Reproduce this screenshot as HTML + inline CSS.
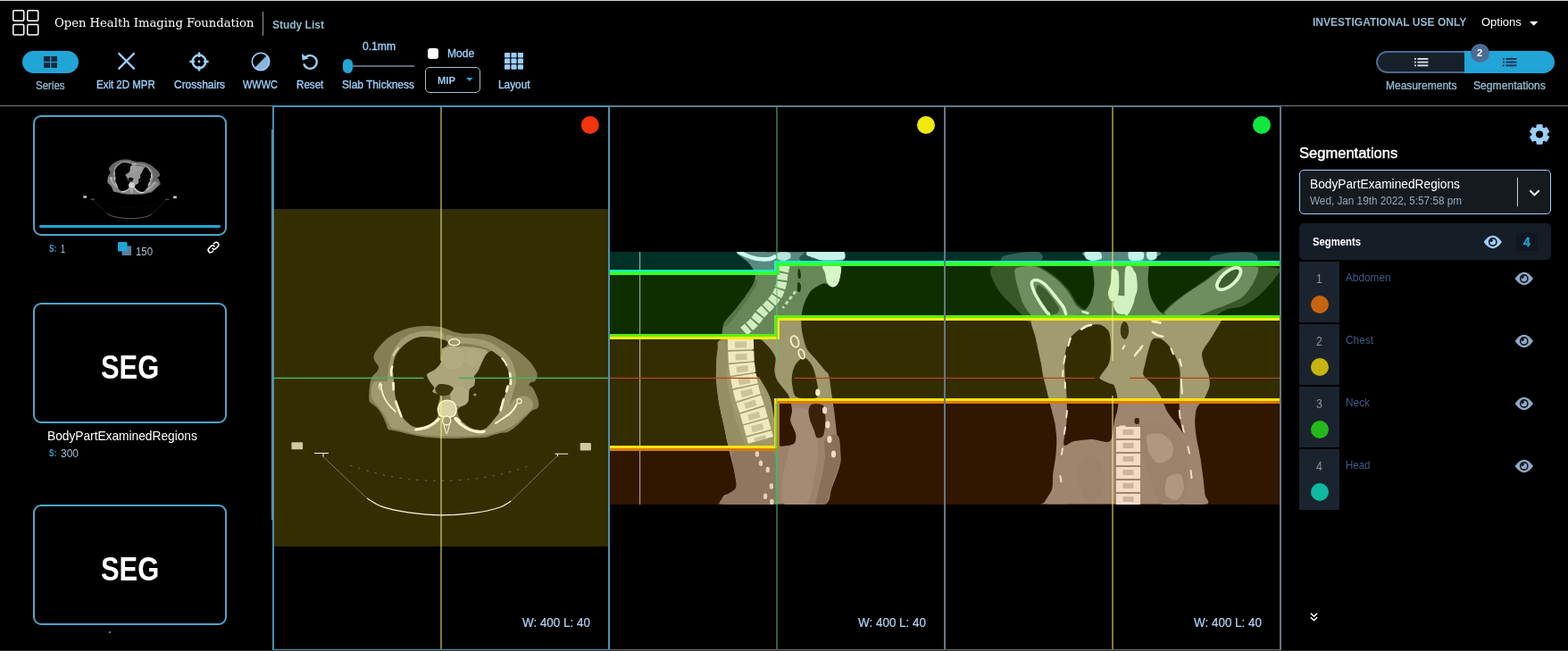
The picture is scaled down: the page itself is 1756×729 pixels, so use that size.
<!DOCTYPE html>
<html lang="en">
<head>
<meta charset="utf-8">
<title>OHIF Viewer</title>
<style>
*{box-sizing:border-box;margin:0;padding:0}
html,body{width:1756px;height:729px;overflow:hidden;background:#000}
body{position:relative;font-family:"Liberation Sans",sans-serif;color:#fff;font-size:13px}
.a{position:absolute}
.t{position:absolute;white-space:nowrap;line-height:1;transform-origin:0 0}
svg{position:absolute;overflow:visible}
</style>
</head>
<body>
<div class="a" style="left:0;top:0;width:1756px;height:1px;background:#d0d0d0"></div>

<!-- header -->
<svg style="left:14px;top:11px" width="30" height="30" viewBox="0 0 30 30" fill="none" stroke="#fff" stroke-width="1.5">
<rect x="0.75" y="0.75" width="12" height="11.5" rx="1.2"/><rect x="16.75" y="0.75" width="12" height="11.5" rx="1.2"/>
<rect x="0.75" y="16.5" width="12" height="11.5" rx="1.2"/><rect x="16.75" y="16.5" width="12" height="11.5" rx="1.2"/>
</svg>
<div class="t" style="left:60.5px;top:18.6px;font-size:13.6px;color:#fff;font-family:'DejaVu Serif','Liberation Serif',serif;transform:scaleX(0.9671);">Open Health Imaging Foundation</div>
<div class="a" style="left:294px;top:13px;width:1px;height:27px;background:#8d9aa3"></div>
<div class="t" style="left:304.8px;top:21.0px;font-size:13px;color:#91b9cd;font-weight:bold;transform:scaleX(0.9214);">Study List</div>
<div class="t" style="left:1470.3px;top:17.9px;font-size:13px;color:#91b9cd;font-weight:bold;transform:scaleX(0.9252);">INVESTIGATIONAL USE ONLY</div>
<div class="t" style="left:1659.2px;top:17.5px;font-size:13.5px;color:#fff;transform:scaleX(0.9608);">Options</div>
<svg style="left:1712.5px;top:24px" width="9.4" height="4.8" viewBox="0 0 10 5"><path d="M0 0h10L5 5z" fill="#fff"/></svg>
<!-- toolbar -->
<div class="a" style="left:25px;top:57px;width:63px;height:25px;border-radius:12.5px;background:#20a5d6"></div>
<svg style="left:49px;top:63px" width="15" height="13" viewBox="0 0 15 13" fill="#14293c">
<rect x="0" y="0" width="7.1" height="6"/><rect x="8.3" y="0" width="6.7" height="6"/>
<rect x="0" y="7.2" width="7.1" height="5.8"/><rect x="8.3" y="7.2" width="6.7" height="5.8"/></svg>
<div class="t" style="left:40.2px;top:88.7px;font-size:13px;color:#91b9cd;-webkit-text-stroke:0.35px #91b9cd;transform:scaleX(0.8847);">Series</div>
<svg style="left:131px;top:58px" width="21" height="21" viewBox="0 0 21 21"><path d="M1.6 1.4L19.6 19.4M19.6 1.4L1.6 19.4" stroke="#9ccef9" stroke-width="2.2" fill="none"/></svg>
<div class="t" style="left:108.2px;top:88.0px;font-size:13px;color:#9ccef9;-webkit-text-stroke:0.35px #9ccef9;transform:scaleX(0.8844);">Exit 2D MPR</div>
<svg style="left:211.5px;top:57.5px" width="22" height="22" viewBox="0 0 22 22" fill="none" stroke="#9ccef9">
<circle cx="11" cy="11" r="7.4" stroke-width="2.5"/>
<path d="M11 0.4V6M11 16V21.6M0.4 11H6M16 11H21.6" stroke-width="2.6"/>
<circle cx="11" cy="11" r="1.4" fill="#9ccef9" stroke="none"/></svg>
<div class="t" style="left:194.9px;top:88.0px;font-size:13px;color:#9ccef9;-webkit-text-stroke:0.35px #9ccef9;transform:scaleX(0.9191);">Crosshairs</div>
<svg style="left:280.5px;top:57.5px" width="22" height="22" viewBox="0 0 22 22">
<path d="M18.2 3.8A10.2 10.2 0 0 1 3.8 18.2z" fill="#86b4dc"/>
<circle cx="11" cy="11" r="9.7" fill="none" stroke="#9ccef9" stroke-width="1.6"/></svg>
<div class="t" style="left:272.2px;top:88.0px;font-size:13px;color:#9ccef9;-webkit-text-stroke:0.35px #9ccef9;transform:scaleX(0.8442);">WWWC</div>
<svg style="left:336.5px;top:58.5px" width="20" height="20" viewBox="0 0 20 20" fill="none">
<path d="M4.2 6.3A7.4 7.4 0 1 1 3.2 12.4" stroke="#9ccef9" stroke-width="2.3"/>
<path d="M1 1.2L1.6 8.6L8.6 6.6z" fill="#9ccef9"/></svg>
<div class="t" style="left:331.7px;top:87.9px;font-size:13px;color:#9ccef9;-webkit-text-stroke:0.35px #9ccef9;transform:scaleX(0.8922);">Reset</div>
<div class="t" style="left:405.5px;top:45.6px;font-size:12px;color:#9ccef9;-webkit-text-stroke:0.35px #9ccef9;transform:scaleX(1.0089);">0.1mm</div>
<div class="a" style="left:394px;top:73px;width:70px;height:2px;background:#5a6a7b"></div>
<div class="a" style="left:384px;top:66px;width:11px;height:16px;border-radius:5.5px;background:#20a5d6"></div>
<div class="t" style="left:383.4px;top:87.9px;font-size:13px;color:#9ccef9;-webkit-text-stroke:0.35px #9ccef9;transform:scaleX(0.9202);">Slab Thickness</div>
<div class="a" style="left:479px;top:54px;width:12px;height:12px;border-radius:3px;background:#fff"></div>
<div class="t" style="left:501.1px;top:53.6px;font-size:12.3px;color:#9ccef9;-webkit-text-stroke:0.35px #9ccef9;transform:scaleX(0.9815);">Mode</div>
<div class="a" style="left:476px;top:75px;width:62px;height:29px;border-radius:5px;border:1px solid #a9b9c6"></div>
<div class="t" style="left:490.0px;top:84.2px;font-size:11.6px;color:#9ccef9;font-weight:bold;transform:scaleX(0.9698);">MIP</div>
<svg style="left:521.5px;top:87px" width="7.6" height="4" viewBox="0 0 8 4"><path d="M0 0h8L4 4z" fill="#2a9fd0"/></svg>
<svg style="left:565px;top:59px" width="21" height="19" viewBox="0 0 21 19" fill="#9ccef9"><rect x="0.0" y="0.0" width="6.2" height="5.6" rx="0.8"/><rect x="7.4" y="0.0" width="6.2" height="5.6" rx="0.8"/><rect x="14.8" y="0.0" width="6.2" height="5.6" rx="0.8"/><rect x="0.0" y="6.6" width="6.2" height="5.6" rx="0.8"/><rect x="7.4" y="6.6" width="6.2" height="5.6" rx="0.8"/><rect x="14.8" y="6.6" width="6.2" height="5.6" rx="0.8"/><rect x="0.0" y="13.2" width="6.2" height="5.6" rx="0.8"/><rect x="7.4" y="13.2" width="6.2" height="5.6" rx="0.8"/><rect x="14.8" y="13.2" width="6.2" height="5.6" rx="0.8"/></svg>
<div class="t" style="left:558.2px;top:87.9px;font-size:13px;color:#9ccef9;-webkit-text-stroke:0.35px #9ccef9;transform:scaleX(0.9121);">Layout</div>
<div class="a" style="left:1541px;top:57px;width:100px;height:25px;border-radius:12.5px 0 0 12.5px;background:#16202b;border:2px solid #4c6a8c;border-right:none"></div>
<div class="a" style="left:1640px;top:57px;width:101px;height:25px;border-radius:0 12.5px 12.5px 0;background:#20a5d6"></div>
<svg style="left:1583.8px;top:64.8px" width="16" height="10" viewBox="0 0 16 10" fill="#d3dbe3"><rect x="0" y="0.0" width="1.8" height="1.9"/><rect x="3.4" y="0.0" width="12" height="1.9"/><rect x="0" y="3.7" width="1.8" height="1.9"/><rect x="3.4" y="3.7" width="12" height="1.9"/><rect x="0" y="7.4" width="1.8" height="1.9"/><rect x="3.4" y="7.4" width="12" height="1.9"/></svg>
<svg style="left:1683px;top:64.8px" width="16" height="10" viewBox="0 0 16 10" fill="#15304a"><rect x="0" y="0.0" width="1.8" height="1.9"/><rect x="3.4" y="0.0" width="12" height="1.9"/><rect x="0" y="3.7" width="1.8" height="1.9"/><rect x="3.4" y="3.7" width="12" height="1.9"/><rect x="0" y="7.4" width="1.8" height="1.9"/><rect x="3.4" y="7.4" width="12" height="1.9"/></svg>
<div class="a" style="left:1647px;top:49px;width:21px;height:21px;border-radius:50%;background:#4d6c93"></div>
<div class="t" style="left:1654.3px;top:53.9px;font-size:11.5px;color:#fff;font-weight:bold;transform:scaleX(0.9694);">2</div>
<div class="t" style="left:1551.9px;top:88.9px;font-size:13px;color:#91b9cd;-webkit-text-stroke:0.35px #91b9cd;transform:scaleX(0.9235);">Measurements</div>
<div class="t" style="left:1650.0px;top:88.9px;font-size:13px;color:#91b9cd;-webkit-text-stroke:0.35px #91b9cd;transform:scaleX(0.9329);">Segmentations</div>
<div class="a" style="left:0;top:118px;width:1756px;height:1px;background:#7b7b7b"></div>
<!-- left panel -->
<div class="a" style="left:37px;top:129px;width:217px;height:135px;border:2px solid #4ea5c8;border-radius:9px"></div>
<div class="a" style="left:44px;top:252px;width:203px;height:3px;border-radius:1.5px;background:#20a5d6"></div>
<div class="t" style="left:55.3px;top:273.3px;font-size:11.5px;color:#3a9fd0;font-weight:bold;transform:scaleX(0.7130);">S:</div>
<div class="t" style="left:68.0px;top:272.8px;font-size:12px;color:#a9c3d3;transform:scaleX(0.7492);">1</div>
<svg style="left:132px;top:271px" width="15" height="15" viewBox="0 0 15 15">
<rect x="4.5" y="4.5" width="10.5" height="10.5" fill="#5d7d9d"/><rect x="0" y="0" width="10.5" height="10.5" rx="1" fill="#20a5d6"/></svg>
<div class="t" style="left:151.6px;top:275.8px;font-size:12px;color:#a9c3d3;transform:scaleX(0.9490);">150</div>
<svg style="left:231.5px;top:269.5px" width="14" height="14" viewBox="0 0 14 14" fill="none" stroke="#fff" stroke-width="1.6" stroke-linecap="round">
<path d="M6 8.2a2.7 2.7 0 0 0 3.8 0l2.4-2.4a2.7 2.7 0 0 0-3.8-3.8l-1 1"/>
<path d="M8 5.8a2.7 2.7 0 0 0-3.8 0L1.8 8.2a2.7 2.7 0 0 0 3.8 3.8l1-1"/></svg>
<div class="a" style="left:37px;top:339px;width:217px;height:135px;border:2px solid #4ea5c8;border-radius:9px"></div>
<div class="t" style="left:112.8px;top:394.3px;font-size:36.5px;color:#fff;font-weight:bold;transform:scaleX(0.8459);">SEG</div>
<div class="t" style="left:53.4px;top:480.8px;font-size:14.3px;color:#fff;transform:scaleX(0.9601);">BodyPartExaminedRegions</div>
<div class="t" style="left:55.3px;top:502.3px;font-size:11.5px;color:#3a9fd0;font-weight:bold;transform:scaleX(0.7130);">S:</div>
<div class="t" style="left:68.2px;top:501.8px;font-size:12px;color:#a9c3d3;transform:scaleX(0.9989);">300</div>
<div class="a" style="left:37px;top:565px;width:217px;height:135px;border:2px solid #4ea5c8;border-radius:9px"></div>
<div class="t" style="left:112.8px;top:620.4px;font-size:36.5px;color:#fff;font-weight:bold;transform:scaleX(0.8459);">SEG</div>
<div class="a" style="left:121.5px;top:707px;width:2px;height:1.5px;background:#777"></div>
<div class="a" style="left:303.5px;top:145px;width:2px;height:437px;background:#8a8a8a"></div>
<!-- viewports -->
<svg style="left:0;top:0" width="1756" height="729" viewBox="0 0 1756 729"><defs><filter id="b1" filterUnits="userSpaceOnUse" x="0" y="0" width="1756" height="729"><feGaussianBlur stdDeviation="0.7"/></filter><filter id="b2" filterUnits="userSpaceOnUse" x="0" y="0" width="1756" height="729"><feGaussianBlur stdDeviation="0.45"/></filter></defs><defs><g id="axg"><g filter="url(#b1)"><path d="M493.5 366.3C490.2 365.7 482.7 365.2 479.1 365.1C475.5 365.0 470.0 365.4 466.7 365.8C463.4 366.2 457.4 367.5 454.4 368.4C451.4 369.3 446.7 371.2 444.1 372.5C441.5 373.8 437.2 376.4 434.8 378.2C432.5 379.9 428.5 383.7 426.6 385.9C424.7 388.0 421.5 392.2 420.4 394.1C419.3 396.0 418.4 398.8 418.4 400.3C418.4 401.8 419.7 404.0 420.4 405.4C421.2 406.8 423.8 409.2 424.0 410.6C424.3 411.9 423.4 414.3 422.5 415.7C421.6 417.1 418.4 419.3 417.3 420.9C416.3 422.4 415.3 425.1 414.8 427.0C414.3 429.0 414.0 433.1 413.7 435.3C413.5 437.5 413.2 441.6 413.2 443.5C413.2 445.4 413.2 448.5 413.7 449.7C414.3 450.9 416.0 451.7 417.3 452.8C418.7 453.9 422.0 456.1 423.5 457.9C425.0 459.7 427.5 464.0 428.7 466.2C429.8 468.4 431.4 472.4 432.3 474.4C433.1 476.4 433.8 480.1 434.8 481.1C435.9 482.1 438.2 481.8 440.0 482.1C441.8 482.5 445.7 483.1 448.2 483.7C450.7 484.2 455.8 485.6 458.5 486.2C461.3 486.8 466.1 487.8 468.8 488.3C471.5 488.8 475.8 489.5 479.1 489.8C482.4 490.2 489.7 490.7 493.5 490.9C497.3 491.0 505.0 490.9 507.9 490.9C510.8 490.9 512.4 490.9 515.4 490.9C518.5 490.8 527.0 490.5 530.9 490.3C534.7 490.2 541.2 490.3 544.2 489.8C547.3 489.3 551.2 487.4 553.5 486.7C555.8 486.1 559.8 485.0 561.7 484.7C563.7 484.3 566.3 484.7 567.9 484.2C569.6 483.6 572.2 482.0 574.1 480.6C576.0 479.1 580.3 475.3 582.3 473.4C584.4 471.4 587.7 467.9 589.5 466.2C591.3 464.4 594.1 461.2 595.7 460.0C597.3 458.8 600.8 457.9 601.9 456.9C602.9 455.9 603.4 454.3 603.4 452.8C603.4 451.3 602.5 447.5 601.9 445.6C601.3 443.7 599.6 440.0 598.8 438.4C598.0 436.7 596.5 434.2 595.7 433.2C594.9 432.3 592.7 431.9 592.6 431.2C592.5 430.5 593.8 428.6 594.7 428.1C595.5 427.5 597.9 427.9 598.8 427.0C599.7 426.2 601.0 423.1 601.4 421.9C601.7 420.7 601.7 419.0 601.4 417.8C601.0 416.5 599.7 414.1 598.8 412.6C597.9 411.1 596.0 408.1 594.7 406.5C593.3 404.8 590.3 401.9 588.5 400.3C586.7 398.6 583.2 395.6 581.3 394.1C579.4 392.6 576.1 390.3 574.1 389.0C572.0 387.6 568.1 385.1 565.9 383.8C563.7 382.5 559.8 380.3 557.6 379.2C555.4 378.1 551.6 376.3 549.4 375.6C547.2 374.9 543.6 374.3 541.2 374.0C538.7 373.8 533.6 373.6 530.9 373.5C528.1 373.5 523.3 373.9 520.6 373.7C517.8 373.5 512.5 372.5 510.3 372.0C508.1 371.5 506.4 370.7 504.1 369.9C501.9 369.2 496.8 367.0 493.5 366.3z" fill="#666666" /><path d="M493.5 371.5C491.0 370.8 482.7 370.4 479.1 370.4C475.5 370.5 469.8 371.3 466.7 372.0C463.7 372.7 458.9 374.3 456.5 375.6C454.0 376.9 450.1 379.8 448.2 381.8C446.3 383.7 443.4 387.7 442.0 390.0C440.7 392.3 438.8 396.8 437.9 399.2C437.1 401.7 436.3 406.2 435.9 408.5C435.5 410.8 435.1 414.3 434.8 416.7C434.6 419.2 433.7 424.8 433.8 427.0C433.9 429.2 435.0 430.8 435.9 433.2C436.7 435.7 438.6 442.2 440.0 445.6C441.4 449.0 444.4 455.7 446.2 459.0C447.9 462.3 451.4 467.9 453.4 470.3C455.3 472.6 458.8 475.4 460.6 476.5C462.4 477.5 467.6 479.2 466.7 478.5C465.9 477.8 457.0 474.0 454.4 471.3C451.8 468.6 448.6 461.1 447.2 457.9C445.7 454.8 444.3 450.2 443.6 447.6C442.9 445.0 442.3 440.7 442.0 438.4C441.8 436.0 441.7 432.5 441.5 430.1C441.3 427.8 440.7 423.2 440.5 420.9C440.3 418.5 439.9 414.8 440.0 412.6C440.1 410.4 440.6 406.3 441.0 404.4C441.4 402.5 442.3 399.9 443.1 398.2C443.9 396.6 445.7 393.8 447.2 392.0C448.7 390.3 452.3 386.5 454.4 384.8C456.5 383.2 460.3 380.7 462.6 379.7C465.0 378.7 469.3 377.4 471.9 377.1C474.5 376.8 479.4 377.4 482.2 377.6C484.9 377.9 490.4 378.8 492.5 379.2C494.5 379.6 496.9 381.2 497.6 380.7C498.3 380.2 498.2 376.8 497.6 375.6C497.1 374.3 496.0 372.2 493.5 371.5z" fill="#8a8a8a" /><path d="M500.0 375.6C501.4 374.6 507.5 376.8 510.3 377.1C513.0 377.5 517.8 377.9 520.6 378.2C523.3 378.4 528.1 378.5 530.9 378.9C533.6 379.2 538.4 379.9 541.2 380.7C543.9 381.5 549.0 383.6 551.5 384.8C553.9 386.1 557.5 388.3 559.7 390.0C561.9 391.6 566.0 395.0 567.9 397.2C569.8 399.4 572.9 403.8 574.1 406.5C575.3 409.1 576.6 414.0 577.2 416.7C577.7 419.5 578.2 425.1 578.2 427.0C578.2 429.0 577.7 429.2 577.2 431.2C576.6 433.1 574.9 438.7 574.1 441.5C573.3 444.2 572.0 449.1 571.0 451.8C570.0 454.4 568.1 458.7 566.9 461.0C565.7 463.3 563.5 467.2 561.7 469.2C560.0 471.3 555.8 474.7 553.5 476.5C551.2 478.2 545.9 481.8 544.2 482.6C542.6 483.4 540.6 483.6 541.2 482.6C541.7 481.7 546.7 477.2 548.4 475.4C550.0 473.6 552.3 470.8 553.5 469.2C554.7 467.7 556.7 465.6 557.6 464.1C558.6 462.6 560.0 459.8 560.7 457.9C561.4 456.0 562.1 451.9 562.8 449.7C563.5 447.5 565.0 443.7 565.9 441.5C566.7 439.3 568.3 435.4 568.9 433.2C569.6 431.0 570.9 426.6 571.0 425.0C571.1 423.4 570.2 422.2 570.0 420.9C569.7 419.5 569.5 416.5 568.9 414.7C568.4 412.9 566.8 409.3 565.9 407.5C564.9 405.7 563.1 402.8 561.7 401.3C560.4 399.8 557.1 397.3 555.6 396.2C554.1 395.1 551.8 393.9 550.4 393.1C549.0 392.3 547.9 390.9 545.3 390.0C542.7 389.0 534.8 386.6 530.9 385.9C526.9 385.2 519.6 385.0 515.4 384.8C511.3 384.7 502.1 386.1 500.0 384.8C497.9 383.6 498.6 376.6 500.0 375.6z" fill="#8a8a8a" /><path d="M418.4 428.1C419.7 427.0 423.2 427.1 425.6 427.1C427.9 427.1 433.9 426.7 435.9 428.1C437.8 429.5 439.0 434.5 440.0 437.3C440.9 440.2 442.0 446.4 443.1 449.7C444.2 453.0 446.4 458.9 448.2 462.0C450.0 465.2 454.0 471.0 456.5 473.4C458.9 475.7 463.2 479.1 466.7 479.5C470.3 479.9 479.8 477.7 483.2 476.5C486.6 475.2 489.2 471.1 492.5 470.3C495.8 469.5 504.9 470.0 507.9 470.3C510.9 470.6 512.6 471.9 515.0 472.3C517.4 472.7 522.2 472.0 525.7 473.4C529.2 474.7 537.7 482.5 541.2 482.6C544.6 482.8 548.7 476.9 551.5 474.4C554.2 471.9 559.3 466.8 561.7 464.1C564.2 461.4 567.8 456.3 570.0 453.8C572.2 451.3 575.7 447.0 578.2 445.6C580.7 444.2 586.2 443.1 588.5 443.5C590.8 443.9 594.6 447.0 595.7 448.7C596.8 450.3 597.4 453.9 596.7 455.9C596.0 457.8 592.5 461.2 590.6 463.1C588.6 465.0 584.8 468.2 582.3 470.3C579.9 472.3 574.8 476.9 572.0 478.5C569.3 480.2 565.2 481.5 561.7 482.6C558.3 483.7 550.4 486.0 546.3 486.7C542.2 487.5 535.0 488.0 530.9 488.3C526.8 488.6 518.5 488.7 515.4 488.8C512.4 488.9 510.8 488.8 507.9 488.8C505.0 488.8 497.3 488.9 493.5 488.8C489.7 488.7 482.7 488.1 479.1 487.8C475.5 487.4 469.8 486.8 466.7 486.2C463.7 485.7 459.2 484.3 456.5 483.7C453.7 483.0 448.5 481.6 446.2 481.1C443.8 480.5 440.5 480.6 439.0 479.5C437.4 478.5 435.9 475.3 434.8 473.4C433.7 471.4 432.0 467.2 430.7 465.1C429.5 463.1 427.0 459.7 425.6 457.9C424.2 456.1 421.7 453.4 420.4 451.8C419.2 450.1 416.9 447.8 416.3 445.6C415.7 443.4 415.5 437.6 415.8 435.3C416.1 433.0 417.1 429.2 418.4 428.1z" fill="#878787" /><path d="M494.5 391.0C494.9 389.9 495.8 389.4 497.6 389.0C499.4 388.5 506.2 388.0 507.9 387.9C509.6 387.9 508.6 388.4 510.3 388.4C512.0 388.4 517.8 387.9 520.6 387.9C523.3 388.0 528.1 388.5 530.9 389.0C533.6 389.4 539.1 390.4 541.2 391.0C543.2 391.6 546.0 392.5 546.3 393.6C546.6 394.7 544.1 397.5 543.2 399.2C542.3 401.0 540.6 404.4 539.6 406.5C538.7 408.5 537.0 412.6 536.0 414.7C535.0 416.7 532.4 420.5 531.9 421.9C531.4 423.3 532.0 423.6 531.9 425.0C531.8 426.4 531.7 430.7 530.9 432.2C530.0 433.7 526.5 434.8 525.7 436.3C524.9 437.8 525.0 441.6 524.7 443.5C524.4 445.4 524.5 449.2 523.7 450.7C522.8 452.2 520.3 454.3 518.5 454.8C516.7 455.4 512.2 455.4 510.3 454.8C508.4 454.3 504.4 452.0 504.1 450.7C503.8 449.5 507.9 446.8 507.9 445.6C507.9 444.3 505.4 441.7 503.8 441.5C502.1 441.2 497.5 443.7 495.6 443.5C493.6 443.4 490.9 441.1 489.4 440.4C487.9 439.7 484.6 439.2 484.2 438.4C483.8 437.6 486.4 435.4 486.3 434.3C486.2 433.2 483.9 431.1 483.2 430.1C482.5 429.2 481.8 428.3 481.1 427.1C480.5 425.8 478.3 422.1 478.1 420.9C477.8 419.6 478.0 418.9 479.1 418.0C480.2 417.1 484.6 415.3 486.3 414.2C487.9 413.0 490.4 410.8 491.4 409.5C492.5 408.2 493.6 406.0 494.0 404.4C494.4 402.7 494.7 399.0 494.7 397.2C494.8 395.4 494.1 392.1 494.5 391.0z" fill="#969696" /><circle cx="506.9" cy="400.3" r="12.3" fill="#9e9e9e" stroke="#adadad" stroke-width="0.6"/><circle cx="529.8" cy="400.3" r="10.3" fill="#9b9b9b"/><path d="M471.9 377.1C469.3 377.4 465.0 378.7 462.6 379.7C460.3 380.7 456.5 383.2 454.4 384.8C452.3 386.5 448.7 390.3 447.2 392.0C445.7 393.8 443.9 396.6 443.1 398.2C442.3 399.9 441.4 402.5 441.0 404.4C440.6 406.3 440.1 410.4 440.0 412.6C439.9 414.8 440.3 418.5 440.5 420.9C440.7 423.2 441.3 427.8 441.5 430.1C441.7 432.5 441.8 436.0 442.0 438.4C442.3 440.7 442.9 445.0 443.6 447.6C444.3 450.2 446.3 455.5 447.2 457.9C448.1 460.4 449.3 464.4 450.3 466.2C451.2 467.9 453.0 469.9 454.4 471.3C455.8 472.7 458.9 475.5 460.6 476.5C462.2 477.4 464.8 478.4 466.7 478.5C468.7 478.6 472.9 478.0 475.0 477.5C477.0 476.9 480.5 475.4 482.2 474.4C483.8 473.4 486.2 471.5 487.3 470.3C488.4 469.0 489.9 466.6 490.4 465.1C491.0 463.6 491.4 460.7 491.4 459.0C491.5 457.2 490.8 453.5 490.9 451.8C491.1 450.0 492.3 446.9 492.5 445.6C492.6 444.3 492.6 442.7 492.0 442.0C491.3 441.3 488.4 440.9 487.3 440.4C486.3 440.0 484.4 439.2 484.2 438.4C484.1 437.6 486.4 435.4 486.3 434.3C486.2 433.2 483.9 431.1 483.2 430.1C482.5 429.2 481.8 428.3 481.1 427.1C480.5 425.8 478.3 422.1 478.1 420.9C477.8 419.6 478.0 418.9 479.1 418.0C480.2 417.1 484.6 415.3 486.3 414.2C487.9 413.0 490.4 410.8 491.4 409.5C492.5 408.2 493.6 406.0 494.0 404.4C494.4 402.7 494.6 399.0 494.7 397.2C494.9 395.4 494.7 392.1 495.0 391.0C495.4 389.9 496.8 389.6 497.6 389.0C498.4 388.3 500.8 386.8 501.2 385.9C501.6 384.9 501.9 382.9 500.7 382.0C499.5 381.1 494.9 379.8 492.5 379.2C490.0 378.6 484.9 377.9 482.2 377.6C479.4 377.4 474.5 376.8 471.9 377.1z" fill="#000" /><path d="M550.4 392.9C551.7 392.9 554.1 395.0 555.6 396.2C557.1 397.3 560.4 399.8 561.7 401.3C563.1 402.8 564.9 405.7 565.9 407.5C566.8 409.3 568.4 412.9 568.9 414.7C569.5 416.5 569.7 419.5 570.0 420.9C570.2 422.2 571.1 423.4 571.0 425.0C570.9 426.6 569.6 431.0 568.9 433.2C568.3 435.4 566.7 439.3 565.9 441.5C565.0 443.7 563.5 447.5 562.8 449.7C562.1 451.9 561.4 456.0 560.7 457.9C560.0 459.8 558.6 462.6 557.6 464.1C556.7 465.6 554.7 467.7 553.5 469.2C552.3 470.8 549.6 474.0 548.4 475.4C547.1 476.8 545.5 478.7 544.2 479.5C543.0 480.3 540.6 481.2 539.1 481.4C537.6 481.6 534.6 481.4 532.9 481.1C531.3 480.8 528.3 479.8 526.8 479.0C525.2 478.3 523.0 476.7 521.6 475.6C520.2 474.5 517.6 472.1 516.5 470.8C515.4 469.5 513.9 467.2 513.4 465.6C512.8 464.1 512.1 460.8 512.3 459.5C512.6 458.2 514.3 456.6 515.4 455.9C516.5 455.1 519.3 454.7 520.6 453.8C521.8 452.9 524.1 450.8 524.7 449.2C525.3 447.5 525.0 443.3 525.2 441.5C525.4 439.6 525.5 436.6 526.2 435.3C527.0 434.0 530.1 433.1 530.9 431.7C531.7 430.3 532.1 426.3 532.1 425.0C532.1 423.7 530.4 423.2 530.9 421.9C531.3 420.6 534.4 417.1 535.5 415.2C536.6 413.3 538.2 409.4 539.1 407.5C540.0 405.6 541.3 402.4 542.2 400.8C543.1 399.2 544.7 396.7 545.8 395.6C546.9 394.6 549.1 392.8 550.4 392.9z" fill="#000" /><path d="M487.3 435.3C487.7 433.9 490.4 430.7 492.5 430.1C494.5 429.6 500.7 430.5 502.8 431.2C504.8 431.9 507.8 433.9 507.9 435.3C508.0 436.7 505.4 440.4 503.8 441.5C502.1 442.6 497.5 443.7 495.6 443.5C493.6 443.4 490.5 441.5 489.4 440.4C488.3 439.3 486.9 436.7 487.3 435.3z" fill="#101010" /><circle cx="514.4" cy="443.5" r="9.8" fill="#9c9c9c" stroke="#b4b4b4" stroke-width="0.5"/><circle cx="531.9" cy="442.0" r="1.6" fill="#8a8a8a"/></g><g filter="url(#b2)"><path d="M500.7 448.2C502.6 448.2 506.5 449.4 507.9 450.7C509.3 452.0 510.9 456.0 511.0 457.9C511.1 459.8 510.3 463.9 508.9 465.1C507.6 466.4 502.9 467.2 500.7 467.2C498.5 467.2 493.8 466.4 492.5 465.1C491.1 463.9 490.3 459.8 490.4 457.9C490.5 456.0 492.1 452.0 493.5 450.7C494.9 449.4 498.8 448.2 500.7 448.2z" fill="#cfcfcf" stroke="#ffffff" stroke-width="1.5"/><ellipse cx="500.2" cy="471.0" rx="4.6" ry="5" fill="#8e8e8e" stroke="#ffffff" stroke-width="1.5"/><path d="M497.1 475.9C497.5 477.2 499.4 485.7 500.2 485.7C501.0 485.7 502.9 477.2 503.3 475.9" fill="none" stroke="#ffffff" stroke-width="1.1" stroke-linecap="round" /><path d="M491.4 469.2C490.6 469.9 487.3 473.1 485.3 474.4C483.2 475.7 478.6 478.1 476.0 479.0C473.4 479.9 467.1 480.8 465.7 481.1" fill="none" stroke="#ffffff" stroke-width="3.0" stroke-linecap="round" /><path d="M509.8 468.7C510.7 469.6 514.3 473.8 516.5 475.4C518.6 477.1 523.1 480.0 525.7 481.1C528.3 482.2 533.8 483.4 536.0 483.7C538.2 483.9 541.4 483.2 542.2 483.1" fill="none" stroke="#ffffff" stroke-width="3.0" stroke-linecap="round" /><path d="M511.0 468.2L515.0 471.3" fill="none" stroke="#ffffff" stroke-width="2.5" stroke-linecap="round" /><path d="M425.6 429.1C425.8 429.9 426.6 433.5 427.1 435.3C427.6 437.1 428.4 440.6 429.2 442.5C429.9 444.4 431.6 447.9 432.8 449.7C433.9 451.5 436.6 454.4 437.9 455.9C439.3 457.4 442.4 460.3 443.1 461.0" fill="none" stroke="#ffffff" stroke-width="1.6" stroke-linecap="round" /><ellipse cx="425.9" cy="432.7" rx="1.6" ry="3.6" fill="none" stroke="#ffffff" stroke-width="1"/><path d="M440.5 429.1L440.7 436.3" fill="none" stroke="#ffffff" stroke-width="2.6" stroke-linecap="round" /><path d="M443.3 449.7C443.7 450.8 445.3 455.7 446.2 457.9C447.0 460.1 449.0 465.1 449.5 466.2" fill="none" stroke="#ffffff" stroke-width="2.6" stroke-linecap="round" /><path d="M439.2 410.6C439.0 411.2 438.2 413.9 438.1 415.2C438.0 416.5 438.4 419.7 438.4 420.3" fill="none" stroke="#ffffff" stroke-width="2.4" stroke-linecap="round" /><path d="M440.5 398.2C440.8 397.7 441.8 395.3 442.6 394.1C443.3 392.9 445.7 390.1 446.2 389.5" fill="none" stroke="#d8d8d8" stroke-width="1.6" stroke-linecap="round" /><ellipse cx="508.7" cy="383.3" rx="6.2" ry="3.6" fill="#8a8a8a" stroke="#ffffff" stroke-width="1.3"/><path d="M562.3 401.3C562.6 401.7 564.1 403.4 564.8 404.4C565.5 405.4 567.1 408.4 567.4 409.0" fill="none" stroke="#f0f0f0" stroke-width="2.0" stroke-linecap="round" /><path d="M571.0 418.0C571.1 418.8 571.6 422.3 571.7 423.9C571.9 425.5 572.0 429.2 572.0 430.0" fill="none" stroke="#ffffff" stroke-width="2.6" stroke-linecap="round" /><path d="M568.7 432.7L567.1 438.4" fill="none" stroke="#ffffff" stroke-width="2.6" stroke-linecap="round" /><path d="M564.0 447.1C563.8 447.9 562.7 451.7 562.3 453.3C561.8 454.9 560.7 458.6 560.5 459.5" fill="none" stroke="#ffffff" stroke-width="2.6" stroke-linecap="round" /><path d="M578.7 452.6C578.3 453.3 576.7 456.5 575.6 457.9C574.6 459.3 572.6 461.7 571.0 463.1C569.4 464.4 565.9 466.8 563.8 468.2C561.7 469.7 556.2 473.1 555.1 473.9" fill="none" stroke="#ffffff" stroke-width="2.0" stroke-linecap="round" /><ellipse cx="581.5" cy="449.2" rx="2.6" ry="2.6" fill="none" stroke="#ffffff" stroke-width="1.1"/></g><rect x="326.5" y="495.3" width="12.6" height="8" rx="1" fill="#c4c4c4"/><rect x="649.7" y="496" width="12.2" height="8.6" rx="1" fill="#c4c4c4"/><path d="M352 507.5H368M362 507.5V511.5" stroke="#f8f8f8" stroke-width="1.1" fill="none"/><path d="M621.4 508.2H636.2M624.5 508.2V511" stroke="#f8f8f8" stroke-width="1.1" fill="none"/><path d="M362 511.6L411.1 558M572.3 561.1L624 510.6" stroke="#9a9a9a" stroke-width="0.6" fill="none"/><path d="M411.1 558.0C413.9 559.5 420.3 564.8 428.0 567.4C435.7 570.1 446.5 572.2 457.5 573.8C468.5 575.3 481.7 576.8 493.9 576.9C506.2 577.0 520.5 575.8 531.2 574.4C542.0 573.0 551.8 570.7 558.6 568.5C565.5 566.3 570.0 562.4 572.3 561.1" stroke="#ffffff" stroke-width="1.2" fill="none"/><path d="M392.2 521.1C397.4 522.7 412.9 528.0 423.8 530.6C434.7 533.1 445.9 535.2 457.5 536.5C469.1 537.8 481.4 538.4 493.3 538.4C505.3 538.4 517.5 537.8 529.1 536.5C540.7 535.2 552.0 533.1 562.8 530.6C573.7 528.0 589.2 522.7 594.5 521.1" stroke="#606060" stroke-width="0.8" stroke-dasharray="2.5 7" fill="none"/></g></defs><use href="#axg"/><g transform="translate(-8.65 64.7) scale(0.312)"><use href="#axg"/></g><rect x="307" y="234" width="374.5" height="378" fill="#ffe100" fill-opacity="0.2"/><g filter="url(#b1)" clip-path="url(#csag)"><path d="M826.3 282.2C823.0 283.7 835.1 290.6 837.6 293.5C840.1 296.4 843.7 301.3 844.8 303.8C845.9 306.3 846.2 309.6 845.8 312.0C845.4 314.5 843.4 319.3 841.7 322.3C840.1 325.3 836.0 331.1 833.5 334.7C831.0 338.2 825.9 345.8 823.2 349.1C820.5 352.4 814.7 357.2 812.9 359.3C811.1 361.5 810.5 363.0 809.8 365.5C809.1 368.0 808.5 374.6 807.8 377.9C807.0 381.2 805.0 386.1 804.3 390.2C803.5 394.3 802.5 403.9 802.2 408.7C801.9 413.5 801.8 421.9 802.0 426.2C802.2 430.4 803.1 436.5 803.7 440.6C804.2 444.7 805.4 452.1 806.3 457.0C807.3 462.0 809.6 471.6 810.9 477.6C812.1 483.6 814.8 496.8 816.0 502.3C817.2 507.8 819.0 514.4 820.1 518.7C821.2 523.1 823.6 531.6 824.2 535.2C824.9 538.8 825.4 543.3 824.8 545.5C824.3 547.7 822.0 550.4 820.1 551.7C818.3 552.9 812.6 553.4 810.9 554.7C809.1 556.1 807.7 560.6 807.2 561.9C806.6 563.3 802.1 564.3 806.7 564.6C811.4 565.0 831.6 564.6 841.7 564.6C851.9 564.6 871.9 564.6 882.9 564.6C893.8 564.6 917.6 566.9 924.0 564.6C930.4 562.3 929.4 552.0 931.2 547.5C933.0 543.1 936.0 535.2 937.4 531.1C938.7 527.0 941.1 520.0 941.5 516.7C941.9 513.4 941.0 510.2 940.5 506.4C939.9 502.6 938.2 493.9 937.4 487.9C936.6 481.9 935.1 467.5 934.3 461.1C933.5 454.8 932.0 446.1 931.2 440.6C930.4 435.1 929.1 423.4 928.1 420.0C927.2 416.6 925.9 417.2 924.0 414.9C922.1 412.6 916.5 405.8 913.7 402.5C911.0 399.3 905.5 394.3 903.4 390.2C901.4 386.1 899.1 376.1 898.3 371.7C897.5 367.3 897.0 361.4 897.3 357.3C897.5 353.2 899.0 344.9 900.3 340.8C901.7 336.7 905.2 329.3 907.5 326.4C909.9 323.5 915.6 320.5 917.8 319.2C920.0 318.0 921.9 316.9 924.0 317.2C926.1 317.4 931.2 321.7 933.3 321.3C935.3 320.9 938.2 317.1 939.4 314.1C940.7 311.1 941.8 302.2 942.5 298.7C943.2 295.1 944.6 289.5 944.6 287.3C944.6 285.1 948.0 282.9 942.5 282.2C937.0 281.5 914.1 282.2 903.4 282.2C892.7 282.2 872.6 282.2 862.3 282.2C852.0 282.2 829.6 280.7 826.3 282.2z" fill="#868686"/><path d="M882.9 461.1C884.2 456.0 891.1 457.0 895.2 457.0C899.3 457.0 904.5 457.0 907.5 461.1C910.6 465.3 912.3 474.2 913.7 481.7C915.1 489.3 916.1 497.5 915.8 506.4C915.4 515.3 913.7 525.6 911.7 535.2C909.6 544.8 908.9 559.1 903.4 564.0C897.9 568.9 883.2 569.4 878.7 564.6C874.3 559.8 876.0 544.9 876.7 535.2C877.4 525.5 881.1 514.3 882.9 506.4C884.6 498.5 887.0 495.4 887.0 487.9C887.0 480.3 881.5 466.3 882.9 461.1z" fill="#929292" /><path d="M821.1 506.4C824.4 502.6 834.2 504.3 841.7 504.3C849.3 504.3 861.9 501.3 866.4 506.4C870.9 511.5 868.5 525.5 868.5 535.2C868.5 544.9 876.3 559.7 866.4 564.6C856.5 569.5 817.4 566.4 808.8 564.6C800.2 562.8 812.4 556.9 815.0 553.7C817.5 550.5 823.0 549.9 824.2 545.5C825.4 541.0 822.7 533.5 822.2 527.0C821.7 520.5 817.9 510.2 821.1 506.4z" fill="#777777" /><path d="M924.0 492.0C926.4 487.9 935.5 485.1 938.4 487.9C941.3 490.6 941.1 503.3 941.5 508.5C941.8 513.6 941.7 514.3 940.5 518.7C939.3 523.2 936.3 529.0 934.3 535.2C932.2 541.4 929.8 550.9 928.1 555.8C926.4 560.7 926.4 563.1 924.0 564.6C921.6 566.1 914.4 569.5 913.7 564.6C913.0 559.7 918.2 543.9 919.9 535.2C921.6 526.5 923.3 519.8 924.0 512.6C924.7 505.4 921.6 496.1 924.0 492.0z" fill="#707070" /><path d="M841.7 305.9C842.1 306.5 847.9 312.4 847.9 316.1C847.9 319.9 844.5 324.0 841.7 328.5C839.0 332.9 834.9 338.1 831.4 342.9C828.0 347.7 824.2 353.5 821.1 357.3C818.1 361.1 814.6 364.8 812.9 365.5C811.2 366.2 809.5 364.1 810.9 361.4C812.2 358.7 817.5 353.5 821.1 349.1C824.7 344.6 829.0 339.3 832.5 334.7C835.9 330.0 839.6 325.1 841.7 321.3C843.9 317.5 845.4 314.6 845.4 312.0C845.4 309.5 841.3 305.2 841.7 305.9z" fill="#6c6c6c" /><path d="M804.7 382.0C806.6 380.3 813.1 377.2 815.0 379.9C816.9 382.7 816.2 390.9 816.0 398.4C815.8 405.9 813.8 417.9 813.9 425.0C814.1 432.0 815.3 432.8 817.0 440.6C818.7 448.3 821.5 461.8 824.2 471.4C827.0 481.0 834.7 493.5 833.5 498.2C832.3 502.8 820.8 502.6 817.0 499.2C813.3 495.8 812.6 484.6 810.9 477.6C809.1 470.6 807.5 463.2 806.3 457.0C805.1 450.9 804.3 448.6 803.7 440.6C803.0 432.5 802.2 417.1 802.2 408.7C802.2 400.3 803.2 394.7 803.7 390.2C804.1 385.7 802.8 383.7 804.7 382.0z" fill="#7a7a7a" /><path d="M842.7 380.9C843.9 378.5 849.4 379.1 852.0 380.3C854.6 381.6 860.1 387.5 862.3 390.2C864.5 392.9 867.8 397.2 868.5 400.5C869.1 403.8 867.2 411.5 867.4 414.9C867.7 418.3 868.5 422.5 870.5 426.2C872.6 429.9 880.7 438.2 882.9 442.6C885.1 447.0 886.6 455.2 887.0 459.1C887.3 462.9 884.8 467.9 885.3 471.4C885.9 475.0 890.6 482.4 891.1 485.8C891.6 489.3 891.5 495.4 889.0 497.1C886.6 498.9 875.1 500.4 872.6 499.2C870.1 498.0 870.9 492.4 870.1 487.9C869.3 483.4 867.4 471.0 866.4 465.3C865.4 459.5 864.3 450.2 862.3 444.7C860.2 439.2 853.2 427.5 851.0 424.1C848.8 420.7 846.8 422.4 845.8 419.0C844.8 415.6 843.8 403.5 843.4 398.4C843.0 393.4 841.6 383.4 842.7 380.9z" fill="#000"/><path d="M908.6 452.9C910.8 452.0 919.8 451.5 921.9 453.9C924.1 456.4 924.4 466.9 924.4 471.4C924.4 476.0 923.2 485.4 921.9 487.9C920.7 490.4 916.1 490.8 914.7 489.9C913.4 489.1 912.6 484.2 911.7 481.7C910.7 479.2 908.4 474.2 907.5 471.4C906.7 468.7 905.4 463.6 905.5 461.1C905.6 458.7 906.4 453.9 908.6 452.9z" fill="#0a0a0a"/><path d="M894.2 300.7C894.7 300.0 896.5 304.0 896.8 305.9C897.2 307.7 896.8 311.3 896.2 312.0C895.7 312.7 893.9 311.9 893.6 310.0C893.2 308.1 893.6 301.4 894.2 300.7z" fill="#111" /><path d="M893.6 316.1C894.2 315.1 896.4 317.5 896.8 319.2C897.3 320.9 896.8 325.4 896.2 326.4C895.6 327.5 893.6 327.1 893.1 325.4C892.7 323.7 892.9 317.2 893.6 316.1z" fill="#111" /><path d="M903.4 282.2C907.5 281.0 916.8 280.7 919.9 282.2C923.0 283.7 922.6 289.2 921.9 291.5C921.3 293.7 918.9 295.1 915.8 295.6C912.7 296.1 906.9 295.6 903.4 294.5C900.0 293.5 895.2 291.5 895.2 289.4C895.2 287.3 899.3 283.4 903.4 282.2z" fill="#3a3a3a" /><path d="M891.1 407.7C892.9 405.1 898.0 400.5 900.3 400.5C902.7 400.5 906.8 404.8 908.6 407.7C910.4 410.5 912.8 417.1 913.7 422.1C914.6 427.0 918.2 441.7 915.4 444.7C912.5 447.7 895.8 446.3 892.1 444.7C888.4 443.0 888.1 435.6 887.4 432.3C886.7 429.1 886.5 423.3 887.0 420.0C887.5 416.7 889.3 410.3 891.1 407.7z" fill="#050505"/><path d="M683 282H1057V356H870V377H683z" fill="#000" fill-opacity="0.16"/></g><defs><clipPath id="csag"><rect x="683" y="282" width="374" height="283"/></clipPath><clipPath id="ccor"><rect x="1059" y="282" width="374" height="283"/></clipPath></defs><g filter="url(#b2)" clip-path="url(#csag)"><path d="M827.5 282.4C829.2 283.1 834.2 285.5 837.9 286.8C841.6 288.1 845.9 289.5 849.9 290.0C853.9 290.5 858.9 290.4 861.8 290.0C864.7 289.6 866.5 288.0 867.4 287.6" fill="none" stroke="#ffffff" stroke-width="4.6" stroke-linecap="round"/><path d="M871.0 283.0C872.7 282.1 882.1 282.2 884.0 283.0C885.9 283.8 885.8 287.8 885.0 289.0C884.2 290.2 879.9 291.9 878.0 292.0C876.1 292.1 871.9 291.2 871.0 290.0C870.1 288.8 869.3 283.9 871.0 283.0z" fill="#e4e4e4"/><path d="M904.0 282.0C906.1 281.5 920.9 281.0 925.0 281.0C929.1 281.0 943.0 281.1 945.0 282.0C947.0 282.9 947.4 289.6 945.0 290.5C942.6 291.4 924.3 291.6 921.0 291.5C917.7 291.4 913.7 289.6 912.0 289.0C910.3 288.4 904.8 286.7 904.0 286.0C903.2 285.3 901.9 282.5 904.0 282.0z" fill="#f6f6f6"/><path d="M879.0 297.0C878.6 298.6 877.5 302.8 876.8 306.6C876.1 310.4 875.7 315.7 874.6 319.7C873.5 323.7 872.4 327.0 870.2 330.7C868.0 334.4 864.5 338.2 861.4 341.7C858.3 345.2 854.5 348.3 851.6 351.6C848.7 354.9 847.0 358.2 843.9 361.4C840.8 364.6 834.8 369.4 833.0 371.0" fill="none" stroke="#f0f0f0" stroke-width="11.5" stroke-dasharray="7.5 1.8"/><path d="M891.1 326.4C889.7 328.1 885.3 333.6 882.9 336.7C880.5 339.8 877.7 343.6 876.7 344.9" fill="none" stroke="#dcdcdc" stroke-width="3" stroke-dasharray="4 3"/><path d="M829.4 379.6C829.6 384.4 829.7 398.8 830.7 408.4C831.8 418.0 833.6 428.2 835.7 437.2C837.8 446.2 840.7 452.9 843.4 462.2C846.1 471.5 850.5 487.8 851.9 492.9" fill="none" stroke="#ececec" stroke-width="29" stroke-dasharray="12 1.6"/><path d="M829.4 379.6C829.6 384.4 829.7 398.8 830.7 408.4C831.8 418.0 833.6 428.2 835.7 437.2C837.8 446.2 840.7 452.9 843.4 462.2C846.1 471.5 850.5 487.8 851.9 492.9" fill="none" stroke="#bdbdbd" stroke-width="13" stroke-dasharray="7 6.6" stroke-dashoffset="-3"/><path d="M921.9 297.6C924.7 296.3 937.3 296.0 940.5 298.0C943.6 300.1 941.4 306.4 940.9 310.0C940.4 313.5 939.0 317.3 937.4 319.2C935.8 321.1 933.1 321.8 931.2 321.3C929.3 320.8 927.3 318.7 926.1 316.1C924.9 313.6 924.7 308.9 924.0 305.9C923.3 302.8 919.2 298.9 921.9 297.6z" fill="#fafafa" /><ellipse cx="890.1" cy="382.4" rx="4.2" ry="6.5" transform="rotate(-20 890.1 382.4)" fill="none" stroke="#f0f0f0" stroke-width="1.8"/><ellipse cx="897.7" cy="396.4" rx="3" ry="5.5" transform="rotate(-20 897.7 396.4)" fill="none" stroke="#f0f0f0" stroke-width="1.8"/><ellipse cx="915.8" cy="439.5" rx="2.6" ry="4" fill="#f4f4f4"/><ellipse cx="923.6" cy="459.5" rx="2.6" ry="4" fill="#f4f4f4"/><ellipse cx="926.9" cy="475.5" rx="2.6" ry="4" fill="#f4f4f4"/><ellipse cx="928.9" cy="492.0" rx="2.6" ry="4" fill="#f4f4f4"/><ellipse cx="933.5" cy="508.5" rx="2.6" ry="4" fill="#f4f4f4"/><ellipse cx="852.0" cy="518.7" rx="2.2" ry="3.2" fill="#e8e8e8"/><ellipse cx="859.8" cy="525.9" rx="2.2" ry="3.2" fill="#e8e8e8"/><ellipse cx="863.9" cy="544.5" rx="2.2" ry="3.2" fill="#e8e8e8"/><ellipse cx="857.1" cy="555.8" rx="2.2" ry="3.2" fill="#e8e8e8"/><ellipse cx="864.3" cy="561.9" rx="2.2" ry="3.2" fill="#e8e8e8"/><ellipse cx="847.9" cy="508.5" rx="2.2" ry="3.2" fill="#e8e8e8"/></g><rect x="716" y="282" width="1.2" height="283" fill="#d8d8d8" opacity="0.75"/><path d="M683 282 1057 282 1057 295 870 295 870 305 683 305z" fill="#00f0be" fill-opacity="0.2"/><path d="M683 305 870 305 870 295 1057 295 1057 356 870 356 870 377 683 377z" fill="#4be600" fill-opacity="0.2"/><path d="M683 377 870 377 870 356 1057 356 1057 449 870 449 870 502 683 502z" fill="#ffe100" fill-opacity="0.2"/><path d="M683 502 870 502 870 449 1057 449 1057 565 683 565z" fill="#f56e00" fill-opacity="0.2"/><path d="M683 305H870V295H1057" fill="none" stroke="#38ff24" stroke-width="6"/><path d="M683 303.25H868.25V293.25H1057" fill="none" stroke="#14ffb0" stroke-width="2.5"/><path d="M683 375.5H868.5V354.5H1057" fill="none" stroke="#5cf00c" stroke-width="3"/><path d="M683 378.5H871.5V357.5H1057" fill="none" stroke="#f5ea14" stroke-width="3"/><path d="M683 500.5H868.5V447.5H1057" fill="none" stroke="#ffe010" stroke-width="3"/><path d="M683 503.5H871.5V450.5H1057" fill="none" stroke="#d87c0c" stroke-width="3"/><g filter="url(#b1)" clip-path="url(#ccor)"><path d="M1122.6 287.3C1124.8 285.8 1135.9 283.9 1141.1 283.2C1146.4 282.5 1158.1 281.7 1161.7 282.2C1165.3 282.7 1167.9 285.8 1167.9 287.3C1167.9 288.9 1167.5 292.6 1161.7 293.5C1156.0 294.5 1129.9 295.4 1124.7 294.5C1119.5 293.7 1120.4 288.9 1122.6 287.3z" fill="#3c3c3c" /><path d="M1356.7 287.3C1358.9 285.8 1369.4 283.8 1375.2 283.2C1381.0 282.6 1395.5 282.3 1399.9 282.8C1404.3 283.4 1407.6 285.8 1408.1 287.3C1408.7 288.9 1410.6 293.6 1404.0 294.5C1397.4 295.5 1365.1 295.5 1358.7 294.5C1352.4 293.6 1354.5 288.9 1356.7 287.3z" fill="#3c3c3c" /><path d="M1109.3 301.3C1109.8 299.7 1110.7 298.8 1114.4 298.0C1118.1 297.3 1130.7 296.0 1137.0 296.0C1143.3 295.9 1155.7 295.8 1161.7 297.6C1167.8 299.5 1177.6 306.4 1182.3 310.0C1187.0 313.5 1193.4 320.3 1196.7 324.4C1200.0 328.5 1204.1 337.3 1207.0 340.8C1209.9 344.4 1218.8 348.4 1218.3 351.1C1217.7 353.9 1211.2 360.0 1202.9 361.4C1194.5 362.8 1163.8 363.0 1155.5 361.4C1147.3 359.8 1145.8 353.4 1141.1 349.1C1136.5 344.7 1124.7 333.7 1120.6 328.5C1116.5 323.3 1111.8 313.6 1110.3 310.0C1108.8 306.4 1108.7 302.9 1109.3 301.3z" fill="#343434" /><path d="M1138.1 300.1C1141.1 298.6 1153.9 297.0 1159.7 298.5C1165.4 299.9 1176.5 307.6 1181.3 311.2C1186.0 314.8 1191.8 321.3 1195.0 325.4C1198.3 329.5 1202.6 338.4 1205.3 341.9C1208.0 345.3 1216.1 348.8 1215.2 351.1C1214.3 353.4 1205.9 358.5 1198.7 359.3C1191.6 360.2 1168.6 359.5 1161.7 357.3C1154.9 355.1 1150.1 347.0 1147.3 342.9C1144.6 338.8 1142.5 330.8 1141.1 326.4C1139.8 322.0 1137.4 313.5 1137.0 310.0C1136.6 306.5 1135.0 301.6 1138.1 300.1z" fill="#787878" /><path d="M1301.1 352.1C1302.5 349.4 1307.9 344.0 1311.4 340.8C1315.0 337.7 1323.2 331.8 1327.9 328.5C1332.6 325.2 1341.7 319.4 1346.4 316.1C1351.1 312.9 1359.3 306.2 1362.9 303.8C1366.4 301.4 1369.0 298.9 1373.1 298.0C1377.3 297.2 1388.5 297.2 1393.7 297.2C1398.9 297.2 1407.0 297.6 1412.2 298.0C1417.4 298.5 1430.2 299.7 1432.8 300.7C1435.4 301.8 1433.4 303.3 1431.8 305.9C1430.1 308.5 1423.6 316.7 1420.5 320.3C1417.3 323.8 1412.0 329.6 1408.1 332.6C1404.3 335.6 1396.0 341.1 1391.7 342.9C1387.3 344.7 1379.0 344.6 1375.2 346.0C1371.4 347.3 1365.1 351.1 1362.9 353.2C1360.7 355.2 1367.0 360.3 1358.7 361.4C1350.5 362.5 1308.8 362.6 1301.1 361.4C1293.5 360.2 1299.8 354.9 1301.1 352.1z" fill="#343434" /><path d="M1304.2 351.5C1303.2 349.3 1310.5 343.5 1313.9 340.4C1317.3 337.3 1325.4 331.3 1329.9 328.1C1334.5 324.8 1343.5 319.3 1348.0 316.1C1352.6 313.0 1360.4 306.7 1363.9 304.4C1367.4 302.1 1370.2 299.7 1374.2 298.9C1378.2 298.1 1389.1 298.3 1393.7 298.5C1398.4 298.6 1407.8 297.7 1409.1 300.1C1410.5 302.5 1406.3 311.8 1404.0 316.1C1401.7 320.5 1395.5 329.3 1391.7 332.6C1387.8 335.9 1379.6 338.9 1375.2 340.8C1370.8 342.8 1363.1 345.4 1358.7 347.0C1354.4 348.6 1347.2 351.8 1342.3 353.2C1337.4 354.5 1326.8 357.5 1321.7 357.3C1316.6 357.1 1305.3 353.8 1304.2 351.5z" fill="#787878" /><path d="M1215.2 282.2C1205.1 283.4 1220.3 289.3 1221.4 291.5C1222.5 293.7 1222.9 295.4 1223.4 298.7C1224.0 301.9 1225.5 311.6 1225.5 316.1C1225.5 320.7 1224.5 328.8 1223.4 332.6C1222.3 336.4 1220.0 341.7 1217.3 344.9C1214.5 348.2 1202.0 354.5 1202.9 357.3C1203.7 360.0 1213.1 364.4 1223.4 365.5C1233.7 366.6 1272.4 365.5 1280.0 365.5C1287.6 365.5 1276.9 366.6 1280.6 365.5C1284.2 364.4 1305.1 359.8 1307.3 357.3C1309.5 354.8 1299.5 350.3 1297.0 347.0C1294.6 343.7 1290.3 336.7 1288.8 332.6C1287.3 328.5 1286.0 320.7 1285.7 316.1C1285.4 311.6 1286.3 301.9 1286.7 298.7C1287.2 295.4 1287.4 293.7 1288.8 291.5C1290.2 289.3 1306.8 283.4 1297.0 282.2C1287.2 281.0 1225.3 281.0 1215.2 282.2z" fill="#6c6c6c" /><path d="M1155.5 357.3C1152.5 360.2 1158.3 371.3 1159.7 377.9C1161.0 384.4 1164.7 401.0 1165.8 406.7C1166.9 412.3 1167.2 416.6 1167.9 420.0C1168.6 423.4 1169.9 428.0 1171.0 432.3C1172.1 436.7 1174.7 447.4 1176.1 452.9C1177.5 458.4 1180.3 468.3 1181.3 473.5C1182.2 478.7 1183.2 487.1 1183.3 492.0C1183.5 496.9 1182.8 505.3 1182.3 510.5C1181.7 515.7 1179.8 526.2 1179.2 531.1C1178.7 536.0 1179.4 543.4 1178.2 547.5C1176.9 551.7 1171.2 559.7 1169.9 561.9C1168.7 564.2 1161.8 564.3 1168.9 564.6C1176.0 565.0 1205.8 564.6 1223.4 564.6C1241.1 564.6 1284.2 564.6 1301.1 564.6C1318.1 564.6 1344.1 566.1 1350.5 564.6C1357.0 563.2 1349.9 557.6 1349.5 553.7C1349.1 549.8 1348.1 540.7 1347.4 535.2C1346.7 529.7 1345.3 518.3 1344.3 512.6C1343.4 506.8 1341.1 497.2 1340.2 492.0C1339.4 486.8 1338.2 478.1 1338.2 473.5C1338.2 468.8 1338.9 460.6 1340.2 457.0C1341.6 453.5 1346.5 450.0 1348.5 446.7C1350.4 443.5 1353.9 435.9 1354.6 432.3C1355.3 428.8 1354.4 423.2 1353.6 420.0C1352.8 416.8 1349.4 412.1 1348.5 408.7C1347.5 405.3 1345.3 398.4 1346.4 394.3C1347.5 390.2 1353.9 382.4 1356.7 377.9C1359.4 373.3 1365.6 363.3 1367.0 360.4C1368.3 357.5 1375.8 356.8 1367.0 356.3C1358.2 355.7 1320.3 356.3 1301.1 356.3C1282.0 356.3 1239.3 356.3 1223.4 356.3C1207.6 356.3 1191.3 356.1 1182.3 356.3C1173.2 356.4 1158.6 354.4 1155.5 357.3z" fill="#8a8a8a" /><path d="M1202.9 373.7C1205.3 371.6 1211.4 366.9 1215.2 365.5C1219.0 364.1 1228.1 362.6 1231.7 363.5C1235.2 364.3 1240.3 368.1 1241.9 371.7C1243.6 375.3 1244.0 385.5 1244.0 390.2C1244.0 394.9 1243.3 402.8 1241.9 406.7C1240.6 410.5 1235.1 416.7 1233.7 419.0C1232.3 421.3 1230.6 422.7 1231.7 424.1C1232.8 425.5 1239.8 428.2 1241.9 429.3C1244.1 430.4 1246.7 429.2 1248.1 432.3C1249.5 435.5 1252.2 447.7 1252.2 452.9C1252.2 458.1 1249.4 465.9 1248.1 471.4C1246.9 476.9 1246.3 491.3 1243.0 494.1C1239.7 496.8 1228.8 492.0 1223.4 492.0C1218.1 492.0 1207.1 493.2 1202.9 494.1C1198.6 494.9 1192.6 501.2 1191.5 498.2C1190.4 495.2 1194.2 478.6 1194.6 471.4C1195.0 464.3 1194.9 451.5 1194.6 444.7C1194.4 437.8 1192.8 426.2 1192.6 420.0C1192.3 413.8 1192.0 403.5 1192.6 398.4C1193.1 393.4 1195.3 385.3 1196.7 382.0C1198.1 378.7 1200.4 375.9 1202.9 373.7z" fill="#000" /><path d="M1290.9 379.9C1292.8 378.5 1298.4 378.5 1301.1 379.9C1303.9 381.3 1309.0 386.6 1311.4 390.2C1313.9 393.8 1318.3 402.7 1319.7 406.7C1321.0 410.6 1321.6 414.1 1321.7 420.0C1321.9 425.9 1320.7 444.0 1320.7 450.9C1320.7 457.7 1321.0 466.8 1321.7 471.4C1322.4 476.1 1326.1 485.0 1325.8 485.8C1325.6 486.7 1322.1 480.9 1319.7 477.6C1317.2 474.3 1309.8 465.3 1307.3 461.1C1304.8 457.0 1303.1 450.6 1301.1 446.7C1299.2 442.9 1295.7 435.9 1292.9 432.3C1290.2 428.8 1281.9 423.4 1280.6 420.0C1279.2 416.6 1281.8 410.6 1282.6 406.7C1283.5 402.7 1285.6 393.8 1286.7 390.2C1287.8 386.6 1288.9 381.3 1290.9 379.9z" fill="#000" /><ellipse cx="1259.4" cy="370.0" rx="4.6" ry="10" fill="#0a0a0a"/><path d="M1276.5 475.5C1279.5 473.1 1291.5 472.7 1297.0 473.5C1302.5 474.3 1313.5 477.9 1317.6 481.7C1321.7 485.6 1326.2 495.2 1327.9 502.3C1329.5 509.4 1330.8 527.0 1329.9 535.2C1329.1 543.4 1325.6 560.1 1321.7 564.0C1317.9 567.9 1305.3 567.4 1301.1 564.6C1297.0 561.9 1293.6 550.4 1290.9 543.4C1288.1 536.5 1282.8 519.4 1280.6 512.6C1278.4 505.7 1274.9 496.9 1274.4 492.0C1273.9 487.1 1273.4 478.0 1276.5 475.5z" fill="#868686" /><path d="M1284.7 487.9C1286.6 485.1 1297.3 484.5 1301.1 485.8C1305.0 487.2 1312.1 494.6 1313.5 498.2C1314.9 501.7 1313.6 509.8 1311.4 512.6C1309.2 515.3 1300.3 519.6 1297.0 518.7C1293.7 517.9 1288.4 510.5 1286.7 506.4C1285.1 502.3 1282.8 490.6 1284.7 487.9z" fill="#a0a0a0" /><path d="M1307.3 535.2C1309.5 532.2 1319.2 529.4 1321.7 531.1C1324.2 532.7 1326.4 543.7 1325.8 547.5C1325.3 551.4 1320.3 559.1 1317.6 559.9C1314.9 560.7 1306.6 557.0 1305.3 553.7C1303.9 550.4 1305.1 538.2 1307.3 535.2z" fill="#a0a0a0" /><path d="M1207.0 518.7C1208.9 514.4 1219.6 509.4 1223.4 510.5C1227.3 511.6 1234.4 521.5 1235.8 527.0C1237.1 532.5 1235.9 547.0 1233.7 551.7C1231.5 556.3 1222.6 563.0 1219.3 561.9C1216.0 560.8 1210.7 549.2 1209.0 543.4C1207.4 537.7 1205.1 523.1 1207.0 518.7z" fill="#868686" /><ellipse cx="1273.4" cy="471.4" rx="2.6" ry="3.4" fill="#111"/><ellipse cx="1273.2" cy="471.4" rx="2.6" ry="3.4" fill="#111"/></g><g filter="url(#b2)" clip-path="url(#ccor)"><path d="M1215.2 282.2C1217.3 281.2 1229.2 281.2 1231.7 282.2C1234.1 283.2 1234.8 288.1 1233.7 289.4C1232.6 290.7 1225.8 291.9 1223.4 291.9C1221.1 291.9 1217.3 290.7 1216.2 289.4C1215.1 288.1 1213.1 283.2 1215.2 282.2z" fill="#f4f4f4" /><path d="M1264.6 282.2C1266.5 281.4 1277.9 281.1 1280.0 282.2C1282.1 283.3 1281.2 289.1 1280.0 290.4C1278.8 291.7 1272.7 292.1 1270.7 291.9C1268.8 291.6 1266.4 289.7 1265.6 288.4C1264.8 287.1 1262.7 283.0 1264.6 282.2z" fill="#f4f4f4" /><path d="M1264.1 282.2C1265.5 281.2 1272.9 281.1 1274.4 282.2C1275.9 283.3 1276.3 289.1 1275.4 290.4C1274.6 291.7 1269.7 292.0 1268.2 291.9C1266.7 291.7 1264.7 290.7 1264.1 289.4C1263.6 288.1 1262.7 283.2 1264.1 282.2z" fill="#f4f4f4" /><path d="M1284.7 282.2C1286.1 281.4 1293.6 281.2 1295.0 282.2C1296.3 283.2 1295.8 288.2 1295.0 289.4C1294.1 290.6 1290.2 291.6 1288.8 291.5C1287.4 291.3 1285.2 289.6 1284.7 288.4C1284.1 287.1 1283.3 283.0 1284.7 282.2z" fill="#f4f4f4" /><path d="M1245.0 301.7C1246.1 300.1 1251.1 301.3 1252.2 303.8C1253.3 306.3 1253.4 316.1 1253.3 320.3C1253.1 324.4 1252.4 332.5 1251.2 334.7C1250.0 336.9 1245.4 337.5 1244.0 336.7C1242.6 335.9 1240.9 331.2 1240.9 328.5C1240.9 325.7 1243.5 319.7 1244.0 316.1C1244.6 312.6 1243.9 303.4 1245.0 301.7z" fill="#f4f4f4" /><path d="M1263.5 301.7C1264.9 300.4 1270.4 303.1 1271.8 305.9C1273.1 308.6 1274.0 318.7 1273.8 322.3C1273.7 325.9 1272.0 331.5 1270.7 332.6C1269.5 333.7 1265.8 332.7 1264.6 330.5C1263.3 328.3 1261.6 320.0 1261.5 316.1C1261.4 312.3 1262.2 303.1 1263.5 301.7z" fill="#f4f4f4" /><path d="M1250.2 331.6C1252.5 330.2 1262.2 331.4 1264.6 332.6C1266.9 333.8 1267.9 338.4 1267.7 340.8C1267.4 343.3 1264.6 349.7 1262.5 351.1C1260.5 352.5 1254.3 352.2 1252.2 351.1C1250.2 350.0 1247.4 345.5 1247.1 342.9C1246.8 340.3 1247.8 332.9 1250.2 331.6z" fill="#f4f4f4" /><path d="M1260.0 301.7C1261.1 294.9 1266.6 297.8 1268.2 299.7C1269.9 301.6 1272.1 311.2 1272.3 316.1C1272.6 321.1 1271.4 332.1 1270.3 336.7C1269.2 341.4 1265.5 349.2 1264.1 351.1C1262.7 353.0 1260.5 357.7 1260.0 351.1C1259.5 344.5 1258.9 308.6 1260.0 301.7z" fill="#f4f4f4" /><path d="M1161.7 319.2C1163.0 318.5 1167.6 321.3 1169.9 323.3C1172.3 325.4 1177.0 331.6 1179.2 334.7C1181.4 337.7 1186.0 343.7 1186.4 346.0C1186.8 348.2 1183.9 350.8 1182.3 351.5C1180.6 352.3 1176.1 353.0 1174.1 351.5C1172.0 350.1 1168.6 343.9 1166.9 340.8C1165.1 337.8 1161.4 331.4 1160.7 328.5C1160.0 325.6 1160.5 319.9 1161.7 319.2z" fill="#3a3a3a" /><path d="M1193.6 351.5C1193.2 350.3 1192.8 347.1 1190.9 343.9C1189.0 340.8 1185.6 336.7 1182.3 332.6C1179.0 328.5 1174.4 322.4 1171.0 319.2C1167.5 316.1 1164.3 314.2 1161.7 313.7C1159.1 313.2 1156.2 314.0 1155.5 316.1C1154.9 318.3 1156.5 322.7 1158.0 326.4C1159.6 330.2 1162.5 335.0 1164.8 338.8C1167.1 342.5 1170.4 346.9 1172.0 349.1C1173.6 351.2 1174.1 351.1 1174.5 351.5" fill="none" stroke="#ffffff" stroke-width="3.6" stroke-linecap="round" /><ellipse cx="1376.2" cy="312.0" rx="16.5" ry="7.5" transform="rotate(-42 1376.2 312.0)" fill="#3a3a3a" stroke="#ffffff" stroke-width="3.8"/><path d="M1211.1 368.6C1211.9 368.1 1214.4 366.3 1216.2 365.5C1218.0 364.7 1220.9 364.1 1221.8 363.9" fill="none" stroke="#f4f4f4" stroke-width="2.6" stroke-linecap="round" /><path d="M1212.7 349.1L1218.3 350.7" fill="none" stroke="#f0f0f0" stroke-width="3" stroke-linecap="round" /><path d="M1198.7 378.9L1196.3 387.1" fill="none" stroke="#f0f0f0" stroke-width="2.2" stroke-linecap="round" /><path d="M1193.0 398.4L1191.3 406.7" fill="none" stroke="#f0f0f0" stroke-width="2" stroke-linecap="round" /><path d="M1190.5 414.9L1190.1 421.5" fill="none" stroke="#f0f0f0" stroke-width="2" stroke-linecap="round" /><path d="M1257.4 390.6L1259.4 387.1" fill="none" stroke="#f0f0f0" stroke-width="2" stroke-linecap="round" /><path d="M1270.7 398.4L1274.4 393.3" fill="none" stroke="#f0f0f0" stroke-width="2" stroke-linecap="round" /><path d="M1276.9 390.2L1279.4 387.1" fill="none" stroke="#f0f0f0" stroke-width="2" stroke-linecap="round" /><path d="M1290.9 359.8L1299.1 361.4" fill="none" stroke="#f4f4f4" stroke-width="3" stroke-linecap="round" /><path d="M1290.9 372.1C1291.7 372.6 1294.1 374.6 1296.0 375.4C1297.9 376.2 1301.1 376.6 1302.2 376.8" fill="none" stroke="#f4f4f4" stroke-width="2.6" stroke-linecap="round" /><path d="M1271.9 396.4L1278.5 389.2" fill="none" stroke="#f0f0f0" stroke-width="2.2" stroke-linecap="round" /><path d="M1311.4 390.2L1313.9 396.4" fill="none" stroke="#f0f0f0" stroke-width="2" stroke-linecap="round" /><path d="M1321.1 402.5L1323.0 409.7" fill="none" stroke="#f0f0f0" stroke-width="2" stroke-linecap="round" /><path d="M1192.6 428.2L1193.0 434.4" fill="none" stroke="#f6f6f6" stroke-width="2" stroke-linecap="round" /><path d="M1195.0 460.1L1194.2 467.3" fill="none" stroke="#f6f6f6" stroke-width="2" stroke-linecap="round" /><path d="M1193.0 478.6L1191.8 485.8" fill="none" stroke="#f6f6f6" stroke-width="2" stroke-linecap="round" /><path d="M1189.9 502.3L1188.9 508.9" fill="none" stroke="#f6f6f6" stroke-width="2" stroke-linecap="round" /><path d="M1187.4 533.1L1188.5 539.3" fill="none" stroke="#f6f6f6" stroke-width="2" stroke-linecap="round" /><path d="M1322.7 424.1L1323.8 440.6" fill="none" stroke="#f6f6f6" stroke-width="2" stroke-linecap="round" /><path d="M1320.7 460.1L1321.7 468.3" fill="none" stroke="#f6f6f6" stroke-width="2" stroke-linecap="round" /><path d="M1324.2 476.6L1325.8 483.8" fill="none" stroke="#f6f6f6" stroke-width="2" stroke-linecap="round" /><path d="M1330.4 500.2L1332.0 507.4" fill="none" stroke="#f6f6f6" stroke-width="2" stroke-linecap="round" /><path d="M1333.6 527.0L1334.5 535.2" fill="none" stroke="#f6f6f6" stroke-width="2" stroke-linecap="round" /><path d="M1263.5 478V566" stroke="#f6f6f6" stroke-width="27" stroke-dasharray="13 2" fill="none"/><path d="M1263.5 481V566" stroke="#c4c4c4" stroke-width="12" stroke-dasharray="6 9" fill="none"/><rect x="1253" y="476.5" width="8" height="4.5" rx="1.5" fill="#f4f4f4"/></g><rect x="1059" y="282" width="374" height="13" fill="#00f0be" fill-opacity="0.2"/><rect x="1059" y="295" width="374" height="61" fill="#4be600" fill-opacity="0.2"/><rect x="1059" y="356" width="374" height="93" fill="#ffe100" fill-opacity="0.2"/><rect x="1059" y="449" width="374" height="116" fill="#f56e00" fill-opacity="0.2"/><rect x="1059" y="292" width="374" height="2" fill="#18ffb8"/><rect x="1059" y="294" width="374" height="4" fill="#38ff24"/><rect x="1059" y="353" width="374" height="3" fill="#5cf00c"/><rect x="1059" y="356" width="374" height="3" fill="#f5ea14"/><rect x="1059" y="446" width="374" height="3" fill="#ffe010"/><rect x="1059" y="449" width="374" height="3" fill="#d87c0c"/><rect x="493" y="120" width="2" height="284" fill="#fff67c" fill-opacity="0.5"/><rect x="493" y="443" width="2" height="284" fill="#fff67c" fill-opacity="0.5"/><rect x="307" y="422.59999999999997" width="167.5" height="1.6" fill="#4fae5c"/><rect x="513.5" y="422.59999999999997" width="167.5" height="1.6" fill="#4fae5c"/><rect x="869" y="120" width="2" height="283" fill="#54c872" fill-opacity="0.5"/><rect x="869" y="446" width="2" height="281" fill="#54c872" fill-opacity="0.5"/><rect x="867.6" y="452" width="4.4" height="113" fill="#3fae5e" fill-opacity="0.4"/><rect x="683" y="422.75" width="167.5" height="1.3" fill="#b8431c"/><rect x="889.5" y="422.75" width="167.5" height="1.3" fill="#b8431c"/><rect x="1245" y="120" width="2" height="284" fill="#fff67c" fill-opacity="0.5"/><rect x="1245" y="443" width="2" height="284" fill="#fff67c" fill-opacity="0.5"/><rect x="1059" y="422.75" width="167.5" height="1.3" fill="#b8431c"/><rect x="1265.5" y="422.75" width="167.5" height="1.3" fill="#b8431c"/><circle cx="660.8" cy="140" r="10" fill="#f3340f"/><circle cx="1037" cy="140" r="10" fill="#f0ea0c"/><circle cx="1413" cy="140" r="10" fill="#10e840"/></svg>
<div class="a" style="left:681px;top:118px;width:754px;height:610px;border:2px solid #647883;border-bottom:1px solid #686868"></div>
<div class="a" style="left:1057px;top:120px;width:2px;height:607px;background:#647883"></div>
<div class="a" style="left:305px;top:118px;width:378px;height:610px;border:2px solid #4a90b2;border-bottom-width:1px"></div>
<div class="a" style="left:0;top:728px;width:1756px;height:1px;background:#2b2b2b"></div>
<div class="t" style="left:584.9px;top:690.2px;font-size:14px;color:#b4d3f0;-webkit-text-stroke:0.2px #b4d3f0;transform:scaleX(0.9592);">W: 400 L: 40</div>
<div class="t" style="left:961.0px;top:690.2px;font-size:14px;color:#b4d3f0;-webkit-text-stroke:0.2px #b4d3f0;transform:scaleX(0.9605);">W: 400 L: 40</div>
<div class="t" style="left:1337.0px;top:690.2px;font-size:14px;color:#b4d3f0;-webkit-text-stroke:0.2px #b4d3f0;transform:scaleX(0.9605);">W: 400 L: 40</div>
<!-- right panel -->
<svg style="left:0;top:0" width="1" height="1"><path d="M1720.83 142.76L1721.11 139.71L1727.09 139.71L1727.37 142.76L1729.16 143.80L1731.95 142.52L1734.94 147.69L1732.44 149.46L1732.44 151.54L1734.94 153.31L1731.95 158.48L1729.16 157.20L1727.37 158.24L1727.09 161.29L1721.11 161.29L1720.83 158.24L1719.04 157.20L1716.25 158.48L1713.26 153.31L1715.76 151.54L1715.76 149.46L1713.26 147.69L1716.25 142.52L1719.04 143.80z" fill="#9ccef9" stroke="#9ccef9" stroke-width="0.9" stroke-linejoin="round"/><circle cx="1724.1" cy="150.5" r="4.0" fill="#000"/></svg>
<div class="t" style="left:1455.2px;top:162.7px;font-size:17.3px;color:#fff;-webkit-text-stroke:0.4px #fff;transform:scaleX(0.9566);">Segmentations</div>
<div class="a" style="left:1455px;top:190px;width:282px;height:50px;border:1px solid #9ccef9;border-radius:5px;background:#151a1f"></div>
<div class="t" style="left:1466.5px;top:198.1px;font-size:15px;color:#fff;transform:scaleX(0.9158);">BodyPartExaminedRegions</div>
<div class="t" style="left:1466.5px;top:219.1px;font-size:12px;color:#91a8bb;transform:scaleX(0.9776);">Wed, Jan 19th 2022, 5:57:58 pm</div>
<div class="a" style="left:1699px;top:199px;width:1px;height:32px;background:#c8d0d6"></div>
<svg style="left:1711.5px;top:211.5px" width="13" height="8" viewBox="0 0 13 8"><path d="M1.2 1.2L6.5 6.3L11.8 1.2" fill="none" stroke="#e8e8e8" stroke-width="2"/></svg>
<div class="a" style="left:1455px;top:250px;width:282px;height:41px;border-radius:5px;background:#151d27"></div>
<div class="t" style="left:1470.3px;top:264.8px;font-size:12px;color:#fff;font-weight:bold;transform:scaleX(0.9416);">Segments</div>
<svg style="left:0;top:0" width="1" height="1"><path d="M1661.6 271Q1671.8 256.445 1682.0 271Q1671.8 285.555 1661.6 271z" fill="#9ccef9"/><circle cx="1671.8" cy="271" r="4.9" fill="#10161d"/><circle cx="1671.8" cy="271" r="3.3" fill="#9ccef9"/><circle cx="1670.1" cy="269.3" r="1.7" fill="#10161d"/></svg>
<div class="a" style="left:1698px;top:261px;width:24px;height:20px;border-radius:3px;background:#10171f"></div>
<div class="t" style="left:1705.5px;top:263.9px;font-size:14px;color:#20a5d6;font-weight:bold;-webkit-text-stroke:0.3px #20a5d6;transform:scaleX(0.9889);">4</div>
<div class="a" style="left:1455px;top:293px;width:45px;height:68px;background:#1b242e"></div>
<div class="t" style="left:1473.8px;top:305.4px;font-size:14px;color:#8794a1;transform:scaleX(0.8733);font-size:14px">1</div>
<div class="a" style="left:1468px;top:331px;width:20px;height:20px;border-radius:50%;background:#c8640f"></div>
<div class="t" style="left:1506.5px;top:305.1px;font-size:12px;color:#3f5c84;transform:scaleX(0.9831);">Abdomen</div>
<svg style="left:0;top:0" width="1" height="1"><path d="M1696.6 312Q1706.8 297.445 1717.0 312Q1706.8 326.555 1696.6 312z" fill="#8ea8c6"/><circle cx="1706.8" cy="312" r="4.9" fill="#10161d"/><circle cx="1706.8" cy="312" r="3.3" fill="#8ea8c6"/><circle cx="1705.1" cy="310.3" r="1.7" fill="#10161d"/></svg>
<div class="a" style="left:1455px;top:363px;width:45px;height:68px;background:#1b242e"></div>
<div class="t" style="left:1473.8px;top:375.4px;font-size:14px;color:#8794a1;transform:scaleX(0.8733);font-size:14px">2</div>
<div class="a" style="left:1468px;top:401px;width:20px;height:20px;border-radius:50%;background:#c8b40f"></div>
<div class="t" style="left:1506.5px;top:375.1px;font-size:12px;color:#3f5c84;transform:scaleX(0.9889);">Chest</div>
<svg style="left:0;top:0" width="1" height="1"><path d="M1696.6 382Q1706.8 367.445 1717.0 382Q1706.8 396.555 1696.6 382z" fill="#8ea8c6"/><circle cx="1706.8" cy="382" r="4.9" fill="#10161d"/><circle cx="1706.8" cy="382" r="3.3" fill="#8ea8c6"/><circle cx="1705.1" cy="380.3" r="1.7" fill="#10161d"/></svg>
<div class="a" style="left:1455px;top:433px;width:45px;height:68px;background:#1b242e"></div>
<div class="t" style="left:1473.8px;top:445.4px;font-size:14px;color:#8794a1;transform:scaleX(0.8733);font-size:14px">3</div>
<div class="a" style="left:1468px;top:471px;width:20px;height:20px;border-radius:50%;background:#25b81c"></div>
<div class="t" style="left:1506.5px;top:445.1px;font-size:12px;color:#3f5c84;transform:scaleX(0.9876);">Neck</div>
<svg style="left:0;top:0" width="1" height="1"><path d="M1696.6 452Q1706.8 437.445 1717.0 452Q1706.8 466.555 1696.6 452z" fill="#8ea8c6"/><circle cx="1706.8" cy="452" r="4.9" fill="#10161d"/><circle cx="1706.8" cy="452" r="3.3" fill="#8ea8c6"/><circle cx="1705.1" cy="450.3" r="1.7" fill="#10161d"/></svg>
<div class="a" style="left:1455px;top:503px;width:45px;height:68px;background:#1b242e"></div>
<div class="t" style="left:1473.8px;top:515.4px;font-size:14px;color:#8794a1;transform:scaleX(0.8733);font-size:14px">4</div>
<div class="a" style="left:1468px;top:541px;width:20px;height:20px;border-radius:50%;background:#0fb8a0"></div>
<div class="t" style="left:1506.5px;top:515.1px;font-size:12px;color:#3f5c84;transform:scaleX(0.9586);">Head</div>
<svg style="left:0;top:0" width="1" height="1"><path d="M1696.6 522Q1706.8 507.445 1717.0 522Q1706.8 536.555 1696.6 522z" fill="#8ea8c6"/><circle cx="1706.8" cy="522" r="4.9" fill="#10161d"/><circle cx="1706.8" cy="522" r="3.3" fill="#8ea8c6"/><circle cx="1705.1" cy="520.3" r="1.7" fill="#10161d"/></svg>
<svg style="left:1466.5px;top:686px" width="9" height="10" viewBox="0 0 9 10" fill="none" stroke="#fff" stroke-width="1.5"><path d="M0.8 0.8L4.5 4.2L8.2 0.8M0.8 5.3L4.5 8.7L8.2 5.3"/></svg>
</body>
</html>
